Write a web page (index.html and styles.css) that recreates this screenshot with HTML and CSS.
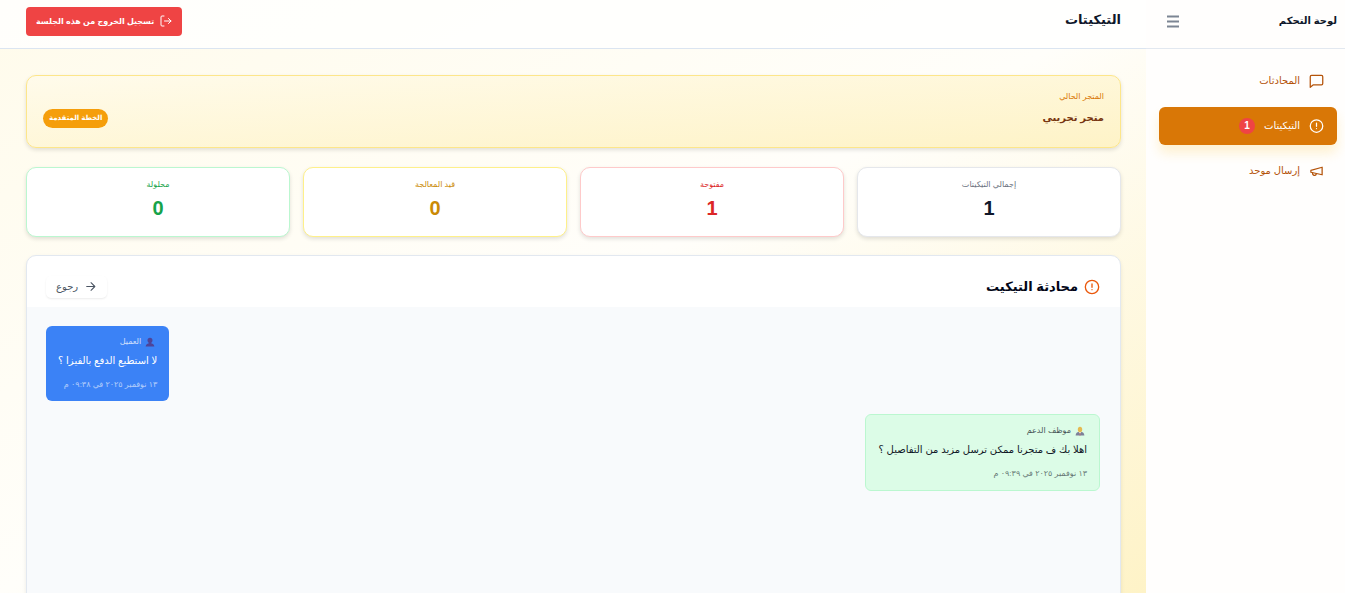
FILE: index.html
```html
<!DOCTYPE html>
<html lang="ar" dir="rtl">
<head>
    <meta charset="UTF-8">
    <meta name="viewport" content="width=device-width, initial-scale=1.0">
    <title>التيكيتات</title>
    <link rel="stylesheet" href="styles.css">
</head>
<body>

<div class="app">
    <aside class="sidebar">
        <div class="sidebar-header">
            <h2>لوحة التحكم</h2>
            <button class="menu-btn" aria-label="القائمة">
                <svg class="icon" viewBox="0 0 14 14"><path d="M1 2.500h12M1 7.500h12M1 12.500h12"/></svg>
            </button>
        </div>
        <nav class="nav">
            <a class="nav-link" href="#">
                <svg class="icon" viewBox="0 0 24 24"><path d="M22 16a2 2 0 0 1-2 2H7l-5 4V5a2 2 0 0 1 2-2h16a2 2 0 0 1 2 2z"/></svg>
                <span>المحادثات</span>
            </a>
            <a class="nav-link active" href="#">
                <svg class="icon" viewBox="0 0 24 24"><circle cx="12" cy="12" r="10"/><path d="M12 7.500v5M12 16h.01"/></svg>
                <span>التيكيتات</span>
                <span class="badge">1</span>
            </a>
            <a class="nav-link" href="#">
                <svg class="icon" viewBox="0 0 24 24"><path d="m3 11 18-5v12L3 14v-3z"/><path d="M11.6 16.8a3 3 0 1 1-5.8-1.6"/></svg>
                <span>إرسال موحد</span>
            </a>
        </nav>
    </aside>

    <div class="page">
        <header class="topbar">
            <h1>التيكيتات</h1>
            <button class="logout-btn">
                <svg class="icon" viewBox="0 0 24 24"><path d="M8 22H4a2 2 0 0 1-2-2V4a2 2 0 0 1 2-2h4"/><path d="m17 17 5-5-5-5M22 12H9"/></svg>
                <span>تسجيل الخروج من هذه الجلسة</span>
            </button>
        </header>

        <main class="content">
            <section class="store-card">
                <div>
                    <p class="store-label">المتجر الحالي</p>
                    <p class="store-name">متجر تجريبي</p>
                </div>
                <span class="plan">الخطة المتقدمة</span>
            </section>

            <section class="stats">
                <div class="stat">
                    <p class="stat-label">إجمالي التيكيتات</p>
                    <p class="stat-value">1</p>
                </div>
                <div class="stat red">
                    <p class="stat-label">مفتوحة</p>
                    <p class="stat-value">1</p>
                </div>
                <div class="stat yellow">
                    <p class="stat-label">قيد المعالجة</p>
                    <p class="stat-value">0</p>
                </div>
                <div class="stat green">
                    <p class="stat-label">محلولة</p>
                    <p class="stat-value">0</p>
                </div>
            </section>

            <section class="chat">
                <div class="chat-header">
                    <h3>
                        <svg class="icon" viewBox="0 0 24 24"><circle cx="12" cy="12" r="10"/><path d="M12 7.500v5M12 16h.01"/></svg>
                        محادثة التيكيت
                    </h3>
                    <button class="back-btn">
                        <svg class="icon" viewBox="0 0 24 24"><path d="M5 12h15M13 5l7 7-7 7"/></svg>
                        <span>رجوع</span>
                    </button>
                </div>
                <div class="chat-body">
                    <article class="message customer">
                        <p class="sender">
                            <svg class="avatar" viewBox="0 0 16 16"><path fill="#55307a" d="M8 1c2.500 0 4 1.700 4 4 0 1.600-.8 3-1.800 3.900v1.300c2.300.5 4.300 1.300 4.800 4.800H1c.5-3.500 2.500-4.300 4.800-4.800V8.900C4.800 8 4 6.600 4 5c0-2.300 1.500-4 4-4z"/></svg>
                            العميل
                        </p>
                        <p class="text">لا استطيع الدفع بالفيزا ؟</p>
                        <time class="time">١٣ نوفمبر ٢٠٢٥ في ٠٩:٣٨ م</time>
                    </article>
                    <article class="message agent">
                        <p class="sender">
                            <svg class="avatar" viewBox="0 0 16 16"><path fill="#5c5880" d="M1 15c.3-3.500 2-5 4.500-5.500h5c2.500.5 4.200 2 4.500 5.500z"/><path fill="#f4f4f4" d="M6 9.500h4L8 12.500z"/><path fill="#b0475a" d="M7.500 11h1l.5 4H7z"/><ellipse cx="8" cy="5.500" rx="3.500" ry="4.500" fill="#e8a520"/></svg>
                            موظف الدعم
                        </p>
                        <p class="text">اهلا بك ف متجرنا ممكن ترسل مزيد من التفاصيل ؟</p>
                        <time class="time">١٣ نوفمبر ٢٠٢٥ في ٠٩:٣٩ م</time>
                    </article>
                </div>
            </section>
        </main>
    </div>
</div>

</body>
</html>
```

FILE: styles.css
```css
/* General Styles */
* {
    box-sizing: border-box;
}

body {
    font-family: "Liberation Sans", "DejaVu Sans", sans-serif;
    margin: 0;
    font-size: 10px;
    line-height: 16px;
    color: #0f172a;
    background-color: #fffdf8;
}

h1, h2, h3, p {
    margin: 0;
}

button {
    font-family: inherit;
    border: none;
    cursor: pointer;
}

.icon {
    width: 16px;
    height: 16px;
    flex-shrink: 0;
    fill: none;
    stroke: currentColor;
    stroke-width: 2;
    stroke-linecap: round;
    stroke-linejoin: round;
}

.app {
    display: flex;
    height: 100vh;
    overflow: hidden;
}

/* Sidebar */
.sidebar {
    width: 199px;
    flex-shrink: 0;
    background-color: #fffefd;
    box-shadow: 0 0 10px rgba(251, 191, 36, 0.12);
}

.sidebar-header {
    display: flex;
    align-items: center;
    justify-content: space-between;
    height: 49px;
    padding: 0 8px 7px 20px;
    border-bottom: 1px solid #e2e8f0;
}

.sidebar-header h2 {
    font-size: 10px;
}

.menu-btn {
    display: flex;
    padding: 0;
    background: none;
    color: #7c8593;
}

.menu-btn .icon {
    width: 14px;
    height: 14px;
    stroke-linecap: butt;
}

.nav {
    display: flex;
    flex-direction: column;
    gap: 7px;
    padding: 13px 8px 13px 13px;
}

.nav-link {
    display: flex;
    align-items: center;
    gap: 9px;
    height: 38px;
    padding: 0 13px;
    border-radius: 6px;
    color: #b45309;
    text-decoration: none;
}

.nav-link .icon {
    width: 15px;
}

.nav-link.active {
    background-color: #d97706;
    color: #fff;
    box-shadow: 0 8px 12px rgba(251, 191, 36, 0.2);
}

.badge {
    width: 16px;
    border-radius: 50%;
    background-color: #ef4444;
    font-weight: bold;
    text-align: center;
}

/* Page */
.page {
    flex: 1;
    min-width: 0;
    display: flex;
    flex-direction: column;
    background: linear-gradient(to bottom right, #fffbeb, #fffefa 50%, #fef3c7);
}

.topbar {
    display: flex;
    align-items: center;
    justify-content: space-between;
    height: 49px;
    flex-shrink: 0;
    padding: 0 25px 6px 26px;
    background-color: rgba(255, 255, 255, 0.8);
    border-bottom: 1px solid #dbe5f1;
}

.topbar h1 {
    padding-bottom: 3px;
    font-size: 13px;
}

.logout-btn {
    display: flex;
    align-items: center;
    gap: 6px;
    height: 29px;
    padding: 0 10px;
    border-radius: 4px;
    background-color: #ef4444;
    color: #fff;
    font-size: 8px;
    font-weight: bold;
}

.logout-btn .icon {
    width: 12px;
    height: 12px;
}

.content {
    flex: 1;
    overflow-y: auto;
    scrollbar-width: none;
    padding: 26px 25px 26px 26px;
}

.store-card {
    display: flex;
    justify-content: space-between;
    align-items: center;
    padding: 13px 16px 19px;
    border: 1px solid #fde68a;
    border-radius: 10px;
    background: linear-gradient(to bottom right, #fffbeb, #fef3c7);
    box-shadow: 0 2px 4px rgba(0, 0, 0, 0.12);
}

.store-label {
    font-size: 8px;
    color: #d97706;
}

.store-name {
    margin-top: 3px;
    font-size: 10px;
    line-height: 20px;
    font-weight: bold;
    color: #78350f;
}

.plan {
    margin-top: 20px;
    padding: 1px 6px 2px;
    border-radius: 10px;
    background-color: #f59e0b;
    color: #fff;
    font-size: 7px;
    font-weight: bold;
}

/* Stats */
.stats {
    display: grid;
    grid-template-columns: repeat(4, 1fr);
    gap: 13px;
    margin: 19px 0 18px;
}

.stat {
    padding: 9px 13px 15px;
    border: 1px solid #e5e7eb;
    border-radius: 10px;
    background-color: #fff;
    box-shadow: 0 2px 4px rgba(0, 0, 0, 0.12);
    text-align: center;
}

.stat-label {
    font-size: 8px;
    color: #6b7280;
}

.stat-value {
    margin-top: 3px;
    font-size: 20px;
    line-height: 25px;
    font-weight: bold;
}

.stat.red {
    border-color: #fecaca;
}

.stat.red p {
    color: #dc2626;
}

.stat.yellow {
    border-color: #fef08a;
}

.stat.yellow p {
    color: #ca8a04;
}

.stat.green {
    border-color: #bbf7d0;
}

.stat.green p {
    color: #16a34a;
}

/* Chat */
.chat {
    border: 1px solid #e2e8f0;
    border-radius: 10px;
    background-color: #fff;
    box-shadow: 0 2px 4px rgba(0, 0, 0, 0.08);
    overflow: hidden;
}

.chat-header {
    display: flex;
    align-items: center;
    justify-content: space-between;
    height: 51px;
    padding: 10px 20px 0 19px;
}

.chat-header h3 {
    display: flex;
    align-items: center;
    gap: 6px;
    font-size: 13px;
    color: #020617;
}

.chat-header h3 .icon {
    color: #ea580c;
}

.back-btn {
    display: flex;
    align-items: center;
    gap: 6px;
    height: 22px;
    padding: 0 10px;
    border-radius: 5px;
    background-color: #fff;
    box-shadow: 0 1px 2px rgba(0, 0, 0, 0.08);
    color: #4b5563;
    font-size: 10px;
}

.back-btn .icon {
    width: 13px;
    height: 13px;
}

.chat-body {
    display: flex;
    flex-direction: column;
    gap: 13px;
    min-height: 400px;
    padding: 19px 20px 19px 19px;
    background-color: #f8fafc;
}

.message {
    padding: 8px 12px;
    border-radius: 6px;
}

.message.customer {
    align-self: flex-end;
    background-color: #3b82f6;
    color: #fff;
}

.message.agent {
    align-self: flex-start;
    border: 1px solid #bbf7d0;
    background-color: #dcfce7;
    color: #111827;
}

.sender {
    display: flex;
    align-items: center;
    gap: 4px;
    font-size: 8px;
    opacity: 0.75;
}

.avatar {
    width: 10px;
    height: 10px;
    margin-right: 2px;
}

.text {
    margin: 1px 0 6px;
    line-height: 20px;
}

.time {
    display: block;
    font-size: 8px;
    opacity: 0.6;
}
```
